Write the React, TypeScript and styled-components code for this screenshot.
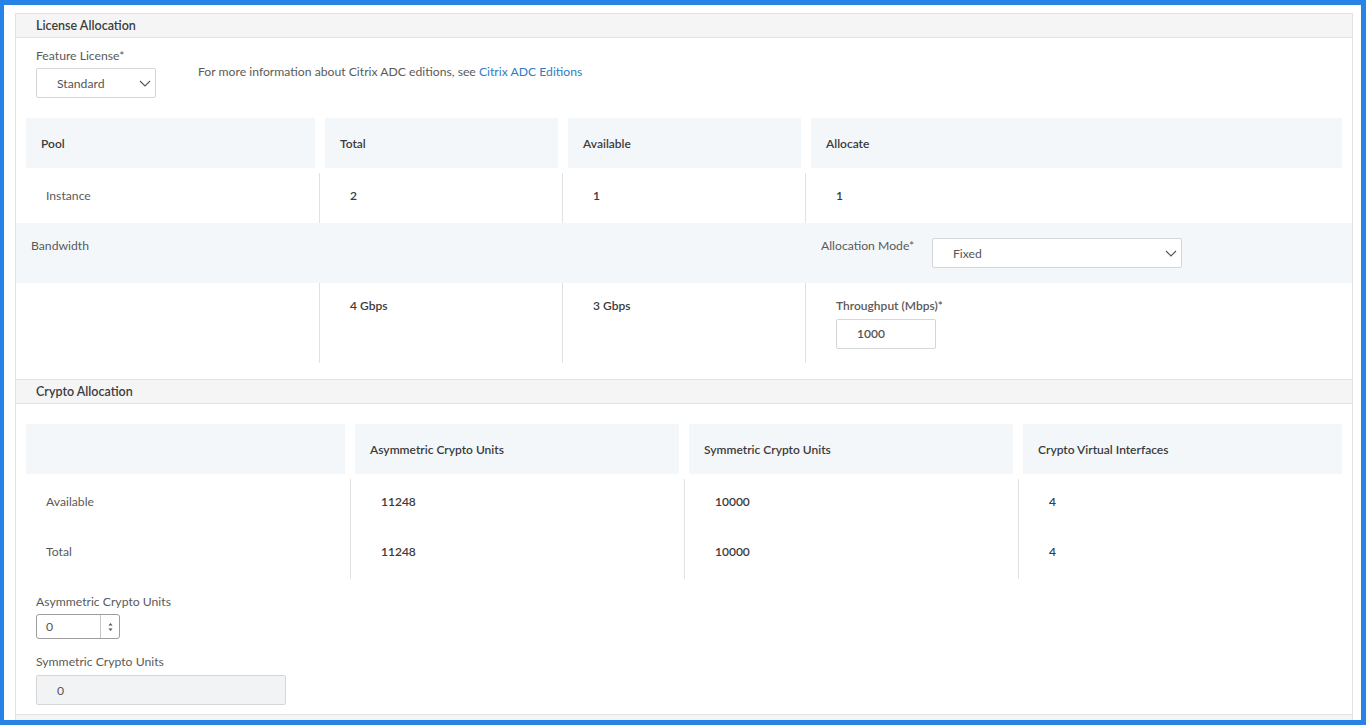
import React from 'react';
import styled, { createGlobalStyle } from 'styled-components';

const GlobalStyle = createGlobalStyle`
  html, body {
    margin: 0;
    padding: 0;
    height: 725px;
    overflow: hidden;
    background: #ffffff;
  }
  body {
    font-family: Lato, 'Liberation Sans', sans-serif;
    font-size: 12.2px;
    color: #555555;
  }
  * {
    box-sizing: border-box;
  }
`;

const Frame = styled.div`
  width: 1366px;
  height: 725px;
  border-style: solid;
  border-color: #2783e6;
  border-width: 5px 5px 5px 4px;
  padding: 8px 8px 0 11px;
  background: #ffffff;
  overflow: hidden;
`;

const Panel = styled.div`
  border-left: 1px solid #e3e3e3;
  border-right: 1px solid #e3e3e3;
  min-height: 100%;
`;

const SectionHeader = styled.div`
  height: 25px;
  border-top: 1px solid #e2e2e2;
  border-bottom: 1px solid #e2e2e2;
  background: #f5f5f5;
  padding-left: 20px;
  display: flex;
  align-items: center;
  font-size: 12.5px;
  font-weight: 600;
  color: #3d3d3d;
`;

const SectionBody = styled.div<{ $top: number; $bottom: number }>`
  padding: ${(p) => p.$top}px 10px ${(p) => p.$bottom}px 10px;
`;

const FieldRow = styled.div`
  display: flex;
  align-items: flex-start;
  gap: 42px;
  margin-left: 10px;
`;

const Field = styled.div<{ $top?: number }>`
  display: flex;
  flex-direction: column;
  margin-left: ${(p) => (p.$top !== undefined ? 10 : 0)}px;
  margin-top: ${(p) => p.$top ?? 0}px;
`;

const Label = styled.label<{ $gap?: number }>`
  display: block;
  line-height: 16px;
  color: #5a5a5a;
  margin-bottom: ${(p) => p.$gap ?? 4}px;
  white-space: nowrap;
`;

const Info = styled.div`
  margin-top: 16px;
  line-height: 16px;
  color: #5a5a5a;
`;

const Link = styled.a`
  color: #2f7dc4;
  text-decoration: none;
`;

const SelectBox = styled.div<{ $width: number }>`
  width: ${(p) => p.$width}px;
  height: 30px;
  border: 1px solid #d6d6d6;
  border-radius: 2px;
  background: #ffffff;
  display: flex;
  align-items: center;
  justify-content: space-between;
  padding: 0 4px 0 20px;
  color: #555555;
`;

const TextBox = styled.div<{ $width: number; $disabled?: boolean }>`
  width: ${(p) => p.$width}px;
  height: 30px;
  border: 1px solid #d6d6d6;
  border-radius: 2px;
  background: ${(p) => (p.$disabled ? '#f2f3f5' : '#ffffff')};
  display: flex;
  align-items: center;
  padding-left: 20px;
  color: #555555;
`;

const Spinner = styled.div`
  width: 84px;
  height: 25px;
  border: 1px solid #9c9c9c;
  border-radius: 3px;
  display: flex;
  color: #555555;
`;

const SpinnerValue = styled.div`
  flex: 1;
  display: flex;
  align-items: center;
  padding-left: 9px;
`;

const SpinnerButtons = styled.div`
  width: 19px;
  border-left: 1px solid #c8c8c8;
  display: flex;
  align-items: center;
  justify-content: center;
`;

const HeadGrid = styled.div<{ $cols: string; $top?: number }>`
  display: grid;
  grid-template-columns: ${(p) => p.$cols};
  column-gap: 10px;
  margin-top: ${(p) => p.$top ?? 0}px;
`;

const HeadCell = styled.div`
  height: 50px;
  background: #f4f7fa;
  padding-left: 15px;
  display: flex;
  align-items: center;
  font-size: 12px;
  font-weight: 600;
  color: #3b3b3b;
`;

const DataGrid = styled.div<{ $cols: string; $top?: number }>`
  display: grid;
  grid-template-columns: ${(p) => p.$cols};
  padding-top: ${(p) => p.$top ?? 0}px;
`;

const DataCell = styled.div<{ $first?: boolean; $height: number; $pad: number }>`
  height: ${(p) => p.$height}px;
  padding-top: ${(p) => p.$pad}px;
  padding-left: ${(p) => (p.$first ? 20 : 30)}px;
  border-left: ${(p) => (p.$first ? 'none' : '1px solid #e2e2e2')};
  line-height: 16px;
  font-size: ${(p) => (p.$first ? 12.2 : 12)}px;
  color: ${(p) => (p.$first ? '#5a5a5a' : '#3b3b3b')};
  font-weight: ${(p) => (p.$first ? 400 : 600)};
`;

const BandRow = styled.div`
  margin: 0 -10px;
  height: 60px;
  background: #f4f7fa;
  display: grid;
  grid-template-columns: 789px 1fr;
  padding-top: 15px;
`;

const BandTitle = styled.div`
  padding-left: 15px;
  line-height: 16px;
  color: #5a5a5a;
`;

const InlineField = styled.div`
  display: flex;
  align-items: flex-start;
  padding-left: 16px;
`;

const InlineLabel = styled.div`
  width: 111px;
  line-height: 16px;
  color: #5a5a5a;
`;

const Chevron = () => (
  <svg width="12" height="7" viewBox="0 0 12 7">
    <polyline points="1,1 6,6 11,1" fill="none" stroke="#555" strokeWidth="1.1" />
  </svg>
);

const Arrows = () => (
  <svg width="5" height="10" viewBox="0 0 5 10">
    <polygon points="2.5,1 4.5,3.5 0.5,3.5" fill="#555" />
    <polygon points="0.5,6.5 4.5,6.5 2.5,9" fill="#555" />
  </svg>
);

const poolCols = '289px 233px 233px 1fr';
const poolData = '293px 243px 243px 1fr';
const cryptoCols = '319px 324px 324px 1fr';
const cryptoData = '324px 334px 334px 1fr';

const cryptoRows = [
  { name: 'Available', asym: '11248', sym: '10000', cvi: '4' },
  { name: 'Total', asym: '11248', sym: '10000', cvi: '4' },
];

export default function App() {
  return (
    <>
      <GlobalStyle />
      <Frame>
        <Panel>
          <SectionHeader>License Allocation</SectionHeader>
          <SectionBody $top={10} $bottom={16}>
            <FieldRow>
              <Field>
                <Label>Feature License*</Label>
                <SelectBox $width={120}>
                  Standard
                  <Chevron />
                </SelectBox>
              </Field>
              <Info>
                For more information about Citrix ADC editions, see{' '}
                <Link href="#">Citrix ADC Editions</Link>
              </Info>
            </FieldRow>

            <HeadGrid $cols={poolCols} $top={20}>
              <HeadCell>Pool</HeadCell>
              <HeadCell>Total</HeadCell>
              <HeadCell>Available</HeadCell>
              <HeadCell>Allocate</HeadCell>
            </HeadGrid>
            <DataGrid $cols={poolData} $top={5}>
              <DataCell $first $height={50} $pad={15}>Instance</DataCell>
              <DataCell $height={50} $pad={15}>2</DataCell>
              <DataCell $height={50} $pad={15}>1</DataCell>
              <DataCell $height={50} $pad={15}>1</DataCell>
            </DataGrid>
            <BandRow>
              <BandTitle>Bandwidth</BandTitle>
              <InlineField>
                <InlineLabel>Allocation Mode*</InlineLabel>
                <SelectBox $width={250}>
                  Fixed
                  <Chevron />
                </SelectBox>
              </InlineField>
            </BandRow>
            <DataGrid $cols={poolData}>
              <DataCell $first $height={80} $pad={15} />
              <DataCell $height={80} $pad={15}>4 Gbps</DataCell>
              <DataCell $height={80} $pad={15}>3 Gbps</DataCell>
              <DataCell $height={80} $pad={15}>
                <Label $gap={5}>Throughput (Mbps)*</Label>
                <TextBox $width={100}>1000</TextBox>
              </DataCell>
            </DataGrid>
          </SectionBody>

          <SectionHeader>Crypto Allocation</SectionHeader>
          <SectionBody $top={20} $bottom={9}>
            <HeadGrid $cols={cryptoCols}>
              <HeadCell />
              <HeadCell>Asymmetric Crypto Units</HeadCell>
              <HeadCell>Symmetric Crypto Units</HeadCell>
              <HeadCell>Crypto Virtual Interfaces</HeadCell>
            </HeadGrid>
            <DataGrid $cols={cryptoData} $top={5}>
              {cryptoRows.map((r) => (
                <React.Fragment key={r.name}>
                  <DataCell $first $height={50} $pad={15}>{r.name}</DataCell>
                  <DataCell $height={50} $pad={15}>{r.asym}</DataCell>
                  <DataCell $height={50} $pad={15}>{r.sym}</DataCell>
                  <DataCell $height={50} $pad={15}>{r.cvi}</DataCell>
                </React.Fragment>
              ))}
            </DataGrid>
            <Field $top={15}>
              <Label>Asymmetric Crypto Units</Label>
              <Spinner>
                <SpinnerValue>0</SpinnerValue>
                <SpinnerButtons>
                  <Arrows />
                </SpinnerButtons>
              </Spinner>
            </Field>
            <Field $top={15}>
              <Label $gap={5}>Symmetric Crypto Units</Label>
              <TextBox $width={250} $disabled>0</TextBox>
            </Field>
          </SectionBody>
          <SectionHeader />
        </Panel>
      </Frame>
    </>
  );
}
